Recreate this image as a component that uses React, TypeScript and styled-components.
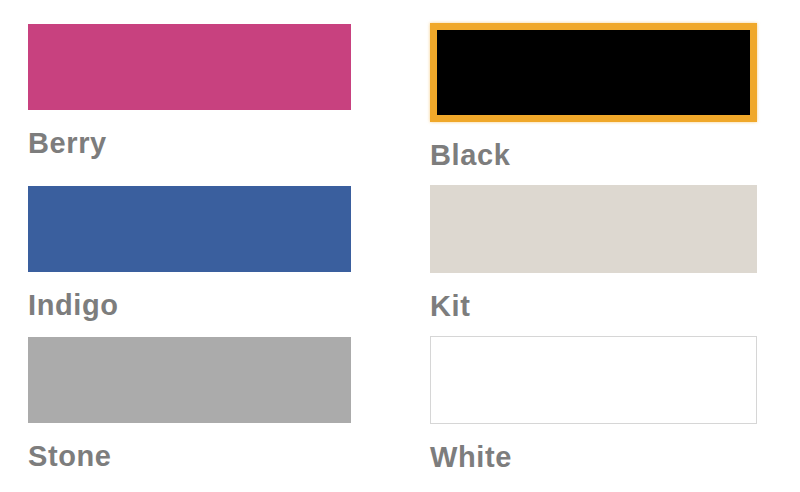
import React from "react";
import styled, { createGlobalStyle } from "styled-components";

const Global = createGlobalStyle`
  html, body { margin: 0; padding: 0; background: #ffffff; }
  body { font-family: "Liberation Sans", Arial, sans-serif; }
`;

const Grid = styled.div`
  display: grid;
  grid-template-columns: 323px 327px;
  column-gap: 79px;
  row-gap: 14px;
  align-items: start;
  padding: 23px 0 0 28px;
`;

const Cell = styled.div<{ $col: number }>`
  display: flex;
  flex-direction: column;
  padding-top: ${(p) => (p.$col === 0 ? 1 : 0)}px;
`;

const Swatch = styled.div<{ $color: string; $col: number; $selected?: boolean; $outlined?: boolean }>`
  box-sizing: border-box;
  width: 100%;
  height: ${(p) => (p.$selected ? 99 : p.$col === 0 ? 86 : 88)}px;
  background: ${(p) => p.$color};
  border: ${(p) =>
    p.$selected ? "7px solid #f0a82a" : p.$outlined ? "1px solid #d6d6d6" : "none"};
  box-shadow: ${(p) => (p.$selected ? "0 0 3px rgba(240,168,42,0.55)" : "none")};
`;

const Label = styled.div`
  margin-top: 17px;
  font-family: "Liberation Sans", Arial, sans-serif;
  font-weight: 700;
  font-size: 29px;
  line-height: 32px;
  letter-spacing: 0.6px;
  color: #7d7d7d;
`;

type Item = { name: string; color: string; selected?: boolean; outlined?: boolean };

const items: Item[] = [
  { name: "Berry", color: "#c8417f" },
  { name: "Black", color: "#000000", selected: true },
  { name: "Indigo", color: "#3a5f9e" },
  { name: "Kit", color: "#ddd8d0" },
  { name: "Stone", color: "#ababab" },
  { name: "White", color: "#ffffff", outlined: true },
];

export default function App() {
  return (
    <>
      <Global />
      <Grid>
        {items.map((it, i) => {
          const col = i % 2;
          return (
            <Cell key={it.name} $col={col}>
              <Swatch
                $color={it.color}
                $col={col}
                $selected={it.selected}
                $outlined={it.outlined}
              />
              <Label>{it.name}</Label>
            </Cell>
          );
        })}
      </Grid>
    </>
  );
}
